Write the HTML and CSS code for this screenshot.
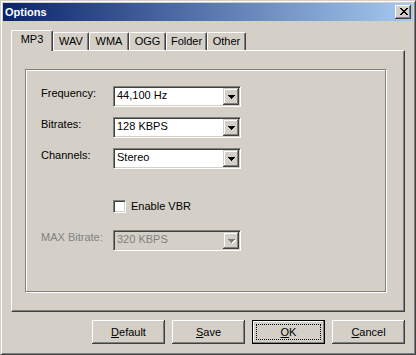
FILE: index.html
```html
<!DOCTYPE html>
<html>
<head>
<meta charset="utf-8">
<title>Options</title>
<link rel="stylesheet" href="styles.css">
</head>
<body>

<div class="window">

<div class="titlebar">
	<span class="title">Options</span>
	<button class="close">
		<svg width="8" height="7" viewBox="0 0 8 7" shape-rendering="crispEdges"><path d="M0 0h2v1H0zM6 0h2v1H6zM1 1h2v1H1zM5 1h2v1H5zM2 2h4v1H2zM3 3h2v1H3zM2 4h4v1H2zM1 5h2v1H1zM5 5h2v1H5zM0 6h2v1H0zM6 6h2v1H6z" fill="#000"/></svg>
	</button>
</div>

<div class="content">

<div class="tabs">
	<div class="tab active tab-mp3">MP3</div>
	<div class="tab tab-wav">WAV</div>
	<div class="tab tab-wma">WMA</div>
	<div class="tab tab-ogg">OGG</div>
	<div class="tab tab-folder">Folder</div>
	<div class="tab tab-other">Other</div>
</div>

<div class="panel">
<div class="group">

	<div class="field">
		<span class="label">Frequency:</span>
		<div class="combo">
			<span class="value">44,100 Hz</span>
			<span class="drop"><svg width="7" height="4" viewBox="0 0 7 4" shape-rendering="crispEdges"><path d="M0 0h7v1H0zM1 1h5v1H1zM2 2h3v1H2zM3 3h1v1H3z" fill="#000"/></svg></span>
		</div>
	</div>

	<div class="field">
		<span class="label">Bitrates:</span>
		<div class="combo">
			<span class="value">128 KBPS</span>
			<span class="drop"><svg width="7" height="4" viewBox="0 0 7 4" shape-rendering="crispEdges"><path d="M0 0h7v1H0zM1 1h5v1H1zM2 2h3v1H2zM3 3h1v1H3z" fill="#000"/></svg></span>
		</div>
	</div>

	<div class="field">
		<span class="label">Channels:</span>
		<div class="combo">
			<span class="value">Stereo</span>
			<span class="drop"><svg width="7" height="4" viewBox="0 0 7 4" shape-rendering="crispEdges"><path d="M0 0h7v1H0zM1 1h5v1H1zM2 2h3v1H2zM3 3h1v1H3z" fill="#000"/></svg></span>
		</div>
	</div>

	<div class="check-row">
		<span class="check"></span>
		<span class="check-text">Enable VBR</span>
	</div>

	<div class="field max-row disabled">
		<span class="label">MAX Bitrate:</span>
		<div class="combo">
			<span class="value">320 KBPS</span>
			<span class="drop"><svg width="8" height="5" viewBox="0 0 8 5" shape-rendering="crispEdges"><path d="M1 1h7v1H1zM2 2h5v1H2zM3 3h3v1H3zM4 4h1v1H4z" fill="#fff"/><path d="M0 0h7v1H0zM1 1h5v1H1zM2 2h3v1H2zM3 3h1v1H3z" fill="#808080"/></svg></span>
		</div>
	</div>

</div>
</div>

<div class="buttons">
	<button class="btn"><u>D</u>efault</button>
	<button class="btn"><u>S</u>ave</button>
	<button class="btn btn-default"><span class="focus"><u>O</u>K</span></button>
	<button class="btn"><u>C</u>ancel</button>
</div>

</div>
</div>

</body>
</html>
```

FILE: styles.css
```css
html,
body {
	margin: 0;
	background: #d4d0c8;
}

body {
	font: 11px/13px "Liberation Sans", Arial, sans-serif;
	color: #000;
}

.window {
	width: 416px;
	height: 355px;
	box-sizing: border-box;
	border: 1px solid;
	border-color: #d4d0c8 #404040 #404040 #d4d0c8;
	box-shadow: inset 1px 1px #fff, inset -1px -1px #808080;
	padding: 2px;
	display: flex;
	flex-direction: column;
	background: #d4d0c8;
}

/* title bar */
.titlebar {
	height: 18px;
	display: flex;
	align-items: center;
	justify-content: space-between;
	padding: 0 2px;
	background: linear-gradient(90deg, #0a246a, #a6caf0);
}

.title {
	color: #fff;
	font-weight: bold;
}

.close {
	width: 16px;
	height: 14px;
	box-sizing: border-box;
	margin: 0;
	border: 0;
	padding: 3px 0 0 5px;
	display: flex;
	align-items: flex-start;
	background: #d4d0c8;
	box-shadow: inset -1px -1px #404040, inset 1px 1px #fff, inset -2px -2px #808080, inset 2px 2px #d4d0c8;
}

.close svg {
	display: block;
}

.content {
	flex: 1;
	display: flex;
	flex-direction: column;
	padding: 9px 8px 8px;
}

/* tabs */
.tabs {
	height: 20px;
	display: flex;
	align-items: flex-end;
}

.tab {
	height: 18px;
	box-sizing: border-box;
	border-top: 1px solid #fff;
	border-left: 1px solid #fff;
	border-right: 1px solid #404040;
	border-radius: 2px 2px 0 0;
	box-shadow: inset -1px 0 #808080;
	padding-top: 2px;
	text-align: center;
}

.tab.active {
	height: 21px;
	margin-bottom: -1px;
	position: relative;
	z-index: 1;
	background: #d4d0c8;
}

.tab-mp3 { width: 42px; }
.tab-wav { width: 36px; }
.tab-wma { width: 40px; }
.tab-ogg { width: 37px; }
.tab-folder { width: 41px; }
.tab-other { width: 39px; }

.panel {
	height: 262px;
	box-sizing: border-box;
	border: 1px solid;
	border-color: #fff #404040 #404040 #fff;
	box-shadow: inset -1px -1px #808080;
	padding: 18px 18px 19px 13px;
	display: flex;
}

.group {
	flex: 1;
	border: 1px solid #808080;
	box-shadow: inset 1px 1px #fff, 1px 1px #fff;
	padding: 16px 0 0 15px;
}

/* form rows */
.field {
	display: flex;
	align-items: flex-start;
}

.field + .field {
	margin-top: 10px;
}

.label {
	width: 72px;
	padding-top: 1px;
}

.combo {
	width: 128px;
	height: 21px;
	box-sizing: border-box;
	border: 1px solid;
	border-color: #808080 #fff #fff #808080;
	box-shadow: inset 1px 1px #404040, inset -1px -1px #d4d0c8;
	background: #fff;
	display: flex;
	padding: 1px;
}

.value {
	flex: 1;
	padding: 1px 2px 0;
}

.drop {
	width: 16px;
	height: 17px;
	box-sizing: border-box;
	display: flex;
	align-items: center;
	justify-content: center;
	background: #d4d0c8;
	box-shadow: inset -1px -1px #404040, inset 1px 1px #d4d0c8, inset -2px -2px #808080, inset 2px 2px #fff;
}

.drop svg {
	display: block;
}

.check-row {
	display: flex;
	align-items: center;
	margin: 31px 0 0 72px;
}

.check {
	width: 13px;
	height: 13px;
	box-sizing: border-box;
	border: 1px solid;
	border-color: #808080 #fff #fff #808080;
	box-shadow: inset 1px 1px #404040, inset -1px -1px #d4d0c8;
	background: #fff;
}

.check-text {
	margin-left: 5px;
}

.field.max-row {
	margin-top: 17px;
}

.disabled .label,
.disabled .value {
	color: #808080;
}

.disabled .combo {
	background: #d4d0c8;
}

.disabled .drop svg {
	margin: 1px 0 0 1px;
}

/* bottom buttons */
.buttons {
	display: flex;
	justify-content: flex-end;
	gap: 7px;
	margin-top: 8px;
}

.btn {
	width: 73px;
	height: 24px;
	box-sizing: border-box;
	margin: 0;
	border: 0;
	padding: 0;
	font: inherit;
	color: #000;
	background: #d4d0c8;
	box-shadow: inset -1px -1px #404040, inset 1px 1px #fff, inset -2px -2px #808080, inset 2px 2px #d4d0c8;
	display: flex;
	align-items: center;
	justify-content: center;
}

.btn-default {
	border: 1px solid #000;
	padding: 3px;
	box-shadow: inset -1px -1px #808080, inset 1px 1px #fff;
	align-items: stretch;
}

.focus {
	flex: 1;
	border: 1px dotted #000;
	display: flex;
	align-items: center;
	justify-content: center;
}
```
